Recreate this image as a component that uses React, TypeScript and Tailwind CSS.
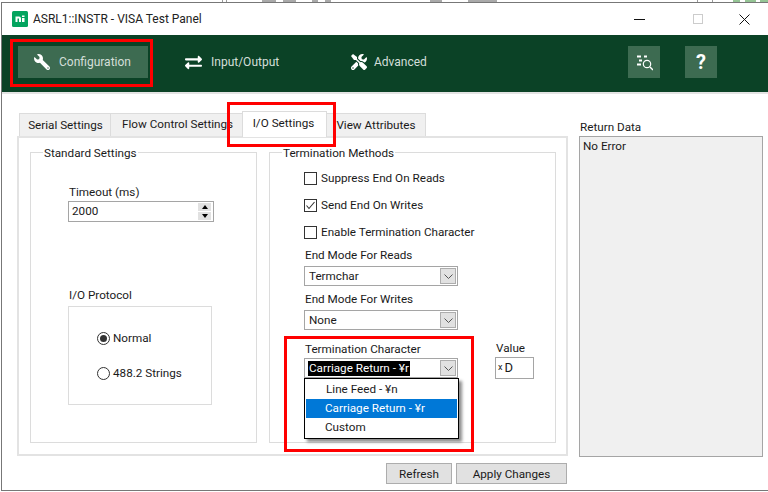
import { FaExchangeAlt, FaTools, FaWrench } from "react-icons/fa";

function Chevron() {
  return (
    <svg width="9" height="5" viewBox="0 0 9 5" fill="none" stroke="#555" strokeWidth="1">
      <path d="M0.5 0.5 L4.5 4.5 L8.5 0.5" />
    </svg>
  );
}

function Combo({ value, selected }: { value: string; selected?: boolean }) {
  return (
    <div className="flex h-[20px] w-[154px] items-center justify-between border border-[#a5a5a5] bg-white pl-[3px] pr-[1px]">
      {selected ? <span className="mt-[1px] bg-black pl-[1px] pr-[1px] leading-[15px] text-white">{value}</span> : <span className="pl-[1px] pt-[1px]">{value}</span>}
      <div className="flex h-[16px] w-[16px] items-center justify-center border border-[#adadad] bg-[#e1e1e1]">
        <Chevron />
      </div>
    </div>
  );
}

function Check({ label, checked }: { label: string; checked?: boolean }) {
  return (
    <div className="flex h-[27px] items-center gap-[4px]">
      <div className="flex h-[13px] w-[13px] items-center justify-center border border-[#333] bg-white">
        {checked && (
          <svg width="11" height="11" viewBox="0 0 11 11" fill="none" stroke="#333" strokeWidth="1.1">
            <path d="M1.5 5.5 L4 8.5 L9.5 2" />
          </svg>
        )}
      </div>
      <span>{label}</span>
    </div>
  );
}

function Radio({ label, checked }: { label: string; checked?: boolean }) {
  return (
    <div className="flex items-center gap-[3px]">
      <div className="flex h-[13px] w-[13px] items-center justify-center rounded-full border border-[#333] bg-white">
        {checked && <div className="h-[7px] w-[7px] rounded-full bg-[#333]" />}
      </div>
      <span>{label}</span>
    </div>
  );
}

function GroupTitle({ children }: { children: string }) {
  return <div className="absolute left-[12px] top-[-8px] bg-white px-[1px] leading-[17px]">{children}</div>;
}

export default function App() {
  return (
    <div
      className="relative h-[492px] w-[768px] overflow-hidden bg-white text-[11.7px] text-[#1a1a1a]"
      style={{ fontFamily: 'Roboto, "Open Sans", sans-serif' }}
    >
      {/* behind the window */}
      <svg className="block" width="768" height="3" viewBox="0 0 768 3">
        <path d="M222.5 0 V2 M226.5 0 V2 M697.5 0 V2 M712.5 0 V2" stroke="#999" />
        <path d="M262 1 H276 M283 1 H296 M312 1 H318 M325 1 H331 M430 1 H442 M468 1 H497" stroke="#555" />
        <path d="M733 1 H740 M745 1 H756 M760 1 H768" stroke="#2a8a2a" />
        <rect x="1" y="2" width="767" height="1" fill="#777" />
      </svg>

      <div className="ml-[1px] border-l border-[#777]">
        {/* Title bar */}
        <div className="flex h-[32px] items-center pl-[10px]">
          <svg width="16" height="16" viewBox="0 0 16 16">
            <rect width="16" height="16" rx="1.5" fill="#03a45e" />
            <path d="M3.5 5.5 h3.5 a2 2 0 0 1 2 2 v3.5 h-2 v-3.5 h-1.5 v3.5 h-2 z M10 7 h2.5 v4 h-2.5 z M10 4.5 h2.5 v1.5 h-2.5 z" fill="#fff" />
          </svg>
          <span className="ml-[5px] text-[12px] text-[#222]">ASRL1::INSTR - VISA Test Panel</span>
          <div className="ml-auto flex items-center">
            <div className="mr-[48px] h-[1px] w-[11px] bg-[#111]" />
            <div className="mr-[36px] h-[10px] w-[10px] border border-[#ccc]" />
            <svg className="mr-[18px]" width="11" height="11" viewBox="0 0 11 11" stroke="#111" strokeWidth="1">
              <path d="M0.5 0.5 L10.5 10.5 M10.5 0.5 L0.5 10.5" />
            </svg>
          </div>
        </div>

        {/* Ribbon */}
        <div className="flex h-[57px] items-center bg-[#0b4226] pb-[3px] pl-[16px] text-[12px] text-[#d4dfd9]">
          <div className="flex h-[32px] w-[130px] items-center bg-[#3d6b51] pl-[16px]">
            <FaWrench className="h-[16px] w-[16px] text-white" style={{ transform: "scaleX(-1)" }} />
            <span className="ml-[9px]">Configuration</span>
          </div>
          <div className="ml-[37px] flex w-[166px] items-center">
            <FaExchangeAlt className="h-[17px] w-[17px] text-white" />
            <span className="ml-[9px]">Input/Output</span>
          </div>
          <div className="flex w-[277px] items-center">
            <FaTools className="h-[16px] w-[16px] text-white" />
            <span className="ml-[7px]">Advanced</span>
          </div>
          <div className="flex h-[32px] w-[32px] items-center justify-center bg-[#3d6b51]">
            <svg width="18" height="18" viewBox="0 0 18 18" fill="none" stroke="#fff">
              <path d="M2 3.5 h4 M9 3.5 h3 M4 7.5 h3 M2 11.5 h4" strokeWidth="2" />
              <circle cx="12" cy="11" r="3.7" strokeWidth="1.2" />
              <path d="M15 14 L18 17" strokeWidth="1.4" />
            </svg>
          </div>
          <div className="ml-[25px] flex h-[32px] w-[32px] items-center justify-center bg-[#3d6b51] text-[20px] font-bold text-white">?</div>
        </div>
        <div className="h-[2px] bg-[#e3e3e3]" />

        {/* Body */}
        <div className="flex h-[397px] border-b border-[#777] pl-[15px] pt-[17px]">
          {/* Tabs + panel */}
          <div className="w-[551px]">
            <div className="flex h-[25px] items-end pl-[2px]">
              <div className="flex h-[23px] w-[92px] items-center justify-center border border-b-0 border-[#dcdcdc] bg-[#f0f0f0] pl-[1px] pt-[1px]">Serial Settings</div>
              <div className="flex h-[23px] w-[131px] items-center border-y border-t-[#dcdcdc] border-b-transparent bg-[#f0f0f0] pl-[11px] pt-[1px]">Flow Control Settings</div>
              <div className="z-10 -mb-[1px] flex h-[26px] w-[85px] items-center justify-center border border-b-0 border-[#dcdcdc] bg-white pb-[2px] pr-[2px]">I/O Settings</div>
              <div className="flex h-[23px] w-[99px] items-center justify-center border border-b-0 border-l-0 border-[#dcdcdc] bg-[#f0f0f0] pt-[1px]">View Attributes</div>
            </div>

            <div className="flex h-[320px] gap-[12px] border-2 border-[#e3e3e3] bg-white pl-[11px] pt-[14px]">
              {/* Standard Settings */}
              <div className="relative h-[291px] w-[227px] border border-[#dcdcdc] pl-[37px] pt-[31px]">
                <GroupTitle>Standard Settings</GroupTitle>
                <div className="pl-[1px] leading-[17px]">Timeout (ms)</div>
                <div className="flex h-[21px] w-[146px] items-center justify-between border border-[#a5a5a5] pl-[3px] pr-[2px]">
                  <span className="pt-[1px]">2000</span>
                  <div className="flex w-[13px] flex-col gap-[1px]">
                    <div className="flex h-[8px] items-center justify-center bg-[#e1e1e1]">
                      <div className="h-0 w-0 border-x-[3px] border-b-[4px] border-x-transparent border-b-black" />
                    </div>
                    <div className="flex h-[8px] items-center justify-center bg-[#e1e1e1]">
                      <div className="h-0 w-0 border-x-[3px] border-t-[4px] border-x-transparent border-t-black" />
                    </div>
                  </div>
                </div>
                <div className="mt-[65px] pl-[1px] leading-[17px]">I/O Protocol</div>
                <div className="mt-[2px] flex h-[99px] w-[144px] flex-col gap-[17px] border border-[#dcdcdc] pl-[28px] pt-[23px]">
                  <Radio label="Normal" checked />
                  <Radio label="488.2 Strings" />
                </div>
              </div>

              {/* Termination Methods */}
              <div className="relative h-[291px] w-[287px] border border-[#dcdcdc] pl-[34px] pt-[12px]">
                <GroupTitle>Termination Methods</GroupTitle>
                <Check label="Suppress End On Reads" />
                <Check label="Send End On Writes" checked />
                <Check label="Enable Termination Character" />
                <div className="mb-[2px] mt-[1px] pl-[1px] leading-[17px]">End Mode For Reads</div>
                <Combo value="Termchar" />
                <div className="mb-[2px] mt-[5px] pl-[1px] leading-[17px]">End Mode For Writes</div>
                <Combo value="None" />
                <div className="mt-[11px] pl-[1px] leading-[17px]">Termination Character</div>
                <div className="flex">
                  <Combo value="Carriage Return - ¥r" selected />
                  <div className="-mt-[18px] ml-[37px]">
                    <div className="pl-[1px] leading-[17px]">Value</div>
                    <div className="flex h-[22px] w-[39px] items-center border border-[#a5a5a5] pl-[2px]">
                      <span className="text-[9px]">x</span>
                      <span className="ml-[2px] text-[13px]">D</span>
                    </div>
                  </div>
                </div>
              </div>
            </div>

            <div className="mt-[7px] flex justify-end gap-[4px] pr-[1px]">
              <div className="flex h-[21px] w-[66px] items-center justify-center border border-[#adadad] bg-[#e1e1e1] pt-[2px]">Refresh</div>
              <div className="flex h-[21px] w-[111px] items-center justify-center border border-[#adadad] bg-[#e1e1e1] pt-[2px]">Apply Changes</div>
            </div>
          </div>

          {/* Return Data */}
          <div className="ml-[11px] w-[184px] pt-[8px]">
            <div className="pl-[1px] leading-[17px]">Return Data</div>
            <div className="h-[321px] border border-[#a5a5a5] bg-[#f0f0f0] pl-[3px] pt-[1px] leading-[17px]">No Error</div>
          </div>
        </div>
      </div>

      {/* Open dropdown list */}
      <div className="absolute left-[304px] top-[378px] h-[61px] w-[155px] border border-black bg-white p-[1px] shadow-[3px_3px_3px_rgba(0,0,0,0.45)]">
        <div className="flex h-[19px] items-center pl-[20px]">Line Feed - ¥n</div>
        <div className="flex h-[19px] items-center bg-[#0078d7] pl-[19px] text-white">Carriage Return - ¥r</div>
        <div className="flex h-[19px] items-center pl-[19px]">Custom</div>
      </div>

      {/* Red highlights */}
      <div className="absolute left-[10px] top-[39px] h-[48px] w-[143px] border-[3px] border-[#ff0000]" />
      <div className="absolute left-[227px] top-[102px] h-[45px] w-[109px] border-[3px] border-[#ff0000]" />
      <div className="absolute left-[284px] top-[336px] h-[116px] w-[190px] border-[3px] border-[#ff0000]" />
    </div>
  );
}
